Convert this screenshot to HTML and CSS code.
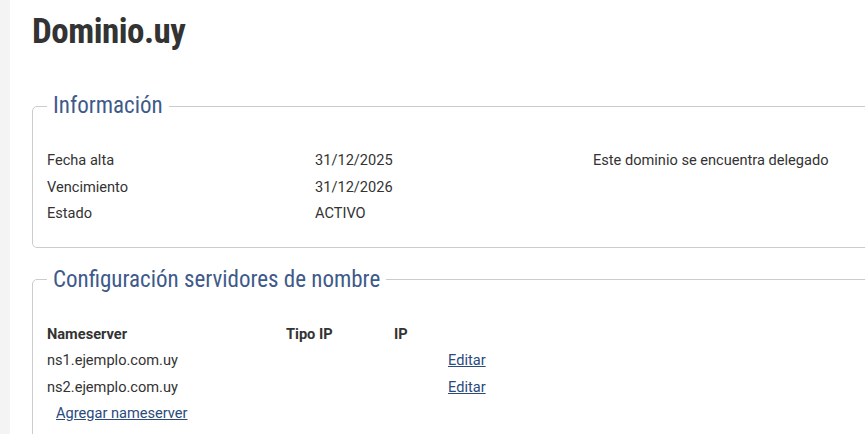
FILE: index.html
```html
<!DOCTYPE html>
<html lang="es">
<head>
  <meta charset="UTF-8" />
  <meta name="viewport" content="width=device-width, initial-scale=1.0"/>
  <title>Dominio.uy</title>
  <link rel="stylesheet" href="styles.css">
</head>
<body>
  <main class="page">
    <h1 class="title">Dominio.uy</h1>

    <fieldset class="box">
      <legend>Información</legend>
      <div class="info">
        <span>Fecha alta</span><span>31/12/2025</span><span>Este dominio se encuentra delegado</span>
        <span>Vencimiento</span><span>31/12/2026</span><span></span>
        <span>Estado</span><span>ACTIVO</span><span></span>
      </div>
    </fieldset>

    <fieldset class="box">
      <legend>Configuración servidores de nombre</legend>
      <div class="ns">
        <span class="head">Nameserver</span><span class="head">Tipo IP</span><span class="head">IP</span><span></span>
        <span>ns1.ejemplo.com.uy</span><span></span><span></span><a href="#">Editar</a>
        <span>ns2.ejemplo.com.uy</span><span></span><span></span><a href="#">Editar</a>
      </div>
      <a class="add" href="#">Agregar nameserver</a>
    </fieldset>
  </main>
</body>
</html>
```

FILE: styles.css
```css
html, body {
  margin: 0;
  overflow: hidden;
}

body {
  background: #f4f4f4;
  font-family: Roboto, "Liberation Sans", sans-serif;
  font-size: 14.6px;
  color: #333;
}

.page {
  margin-left: 10px;
  background: #fff;
  height: 434px;
  padding: 10px 0 0 22px;
  width: 900px;
  box-sizing: border-box;
}

.title {
  margin: 0 0 38px;
  font-size: 35px;
  line-height: 44px;
  font-weight: 700;
  font-stretch: 75%;
  color: #333;
  letter-spacing: -0.5px;
}

.box {
  margin: 0 0 18px;
  border: 1px solid #ccc;
  border-radius: 5px;
  padding: 27px 14px 20px;
  width: 880px;
}

.box legend {
  padding: 0 6px;
  font-size: 23px;
  line-height: 28px;
  font-stretch: 75%;
  color: #3e5a8a;
}

.info {
  display: grid;
  grid-template-columns: 268px 278px auto;
  grid-auto-rows: 26.5px;
  align-items: center;
}

.ns {
  display: grid;
  grid-template-columns: 239px 108px 54px auto;
  grid-auto-rows: 26.5px;
  align-items: center;
}

.head {
  font-weight: 700;
}

a {
  color: #2b4a7d;
}

.add {
  display: inline-block;
  margin-left: 9px;
  line-height: 26.5px;
}
```
